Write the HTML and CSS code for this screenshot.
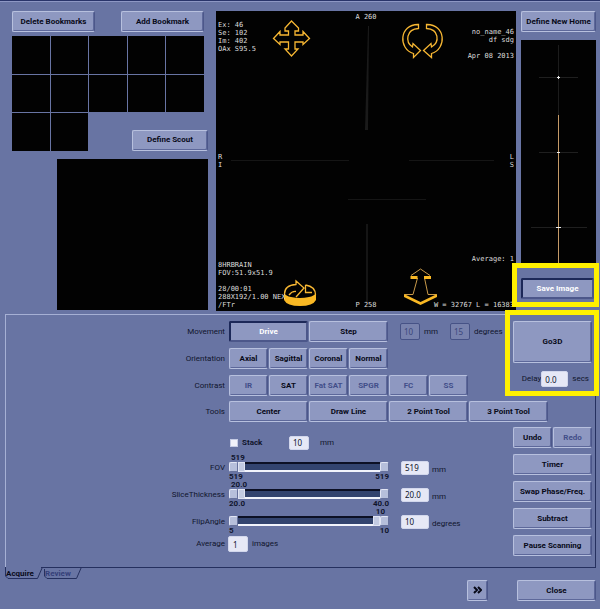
FILE: index.html
```html
<!DOCTYPE html>
<html lang="en">
<head>
<meta charset="utf-8">
<title>Scan Control</title>
<link rel="stylesheet" href="styles.css">
</head>
<body>
<main class="views">
  <section class="side">
    <div class="side-actions">
      <button class="btn">Delete Bookmarks</button>
      <button class="btn">Add Bookmark</button>
    </div>
    <div class="shelf">
      <div class="bookmarks">
        <i></i><i></i><i></i><i></i><i></i><i></i><i></i><i></i><i></i><i></i><i></i><i></i>
      </div>
      <button class="btn scout-btn">Define Scout</button>
    </div>
    <div class="scout"></div>
  </section>

  <section class="viewport">
    <svg class="scene" viewBox="0 0 300 300" aria-hidden="true">
      <path d="M152 15h1l-1 104h-3z" fill="#1a1a1a"/>
      <path d="M15 149h118v1H15zM193 149h85v1h-85zM132 188h78v1h-78zM150 213h2v78h-2z" fill="#151515"/>
      <g fill="none" stroke="#f7b733" stroke-width="1.300">
        <path d="M75.500 10 82.500 17 82.500 20 79 20 79 24 87 24 87 20.500 93.500 27.500 87 33.500 87 31 79 31 79 38 82 38 75.500 45 69 38 69 38 72.500 38 72.500 31 64 31 64 33.500 57.500 27.500 64 20.500 64 24 72.500 24 72.500 20 69 20 69 17z"/>
        <path d="M202.500 13.500C183 13 182 38 197.500 42.500V46.500L204.500 39.500 197 32.500 196.500 36C189 31 190 18 202.500 17.500z"/>
        <path d="M210.500 13.500C230 13 231 38 215.500 42.500V46.500L207.500 39.500 215 32.500 215.500 36C224 31 223 18 210.500 17.500z"/>
        <path d="M80 286 88 277 80 270V273.500C72 274 68.500 278 68.500 283M73 284Q76 280 80 280.500M89.500 274C96 275 99.500 279 99.500 284M89.500 274V281.500H96"/>
      </g>
      <path d="M195 264.500 204.500 258 214 264.500M201.500 267 197 283.500H188.500M208.500 267 212 283.500H220.500" fill="none" stroke="#c99a4a"/>
      <g fill="#f9b824">
        <path d="M194.500 265h7v3h-7zM208 265h7v3h-7z"/>
        <path d="M188 283 204.500 291 221 283V286L204.500 294 188 286z"/>
        <path d="M68 282q2 3 7 4q9 2 18 0q5-1 7-4v7q-3 6-16 6t-16-6z"/>
      </g>
    </svg>
    <pre class="note top-left">Ex: 46
Se: 102
Im: 402
OAx S95.5</pre>
    <pre class="note top-mid">A 260</pre>
    <pre class="note top-right">no_name_46
df sdg

Apr 08 2013</pre>
    <pre class="note mid-left">R
I</pre>
    <pre class="note mid-right">L
S</pre>
    <pre class="note low-left">8HRBRAIN
FOV:51.9x51.9

28/00:01
288X192/1.00 NEX
/FTr</pre>
    <pre class="note low-mid">P 258</pre>
    <pre class="note average">Average: 1</pre>
    <pre class="note low-right">W = 32767 L = 16383</pre>
  </section>

  <section class="home">
    <button class="btn">Define New Home</button>
    <svg class="strip" viewBox="0 0 75 223" aria-hidden="true">
      <path d="M37.500 5v70" stroke="#1c1c1c"/>
      <path d="M18 37.500h39M18 112.500h39M10 187.500h56" stroke="#1f1f1f"/>
      <path d="M37.500 75v148" stroke="#c49a67"/>
      <path d="M36 37.500h3M37.500 36v3M36 112.500h3M35 187.500h5" stroke="#eee"/>
    </svg>
    <div class="save">
      <button class="btn pressed">Save Image</button>
    </div>
  </section>
</main>

<section class="panel">
  <div class="upper">
    <div class="rows">
      <div class="row">
        <span class="label">Movement</span>
        <div class="keys"><button class="btn wide pressed">Drive</button><button class="btn wide">Step</button></div>
        <div class="steps">
          <input class="field off" id="mm" value="10" disabled><label for="mm">mm</label>
          <input class="field off" id="deg" value="15" disabled><label for="deg">degrees</label>
        </div>
      </div>
      <div class="row">
        <span class="label">Orientation</span>
        <div class="keys"><button class="btn">Axial</button><button class="btn">Sagittal</button><button class="btn">Coronal</button><button class="btn">Normal</button></div>
      </div>
      <div class="row">
        <span class="label">Contrast</span>
        <div class="keys"><button class="btn" disabled>IR</button><button class="btn">SAT</button><button class="btn" disabled>Fat SAT</button><button class="btn" disabled>SPGR</button><button class="btn" disabled>FC</button><button class="btn" disabled>SS</button></div>
      </div>
    </div>
    <div class="go">
      <button class="btn go-btn">Go3D</button>
      <div class="delay">
        <label for="delay">Delay</label><input class="field" id="delay" value="0.0"><span class="unit">secs</span>
      </div>
    </div>
  </div>
  <div class="row tools">
    <span class="label">Tools</span>
    <div class="keys"><button class="btn wide">Center</button><button class="btn wide">Draw Line</button><button class="btn wide">2 Point Tool</button><button class="btn wide">3 Point Tool</button></div>
  </div>
  <div class="lower">
    <div class="settings">
      <div class="stack">
        <input type="checkbox" id="stack"><label for="stack">Stack</label>
        <input class="field" value="10" aria-label="Stack spacing"><span>mm</span>
      </div>
      <div class="slider-row">
        <label class="label" for="fov">FOV</label>
        <div class="slider">
          <div class="now">519</div>
          <div class="bar"><button class="cap" aria-label="Decrease"></button><input type="range" id="fov" min="0" max="10" value="0"><button class="cap" aria-label="Increase"></button></div>
          <div class="ends"><span>519</span><span>519</span></div>
        </div>
        <input class="field" value="519" aria-label="FOV value"><span class="unit">mm</span>
      </div>
      <div class="slider-row">
        <label class="label" for="thick">SliceThickness</label>
        <div class="slider">
          <div class="now">20.0</div>
          <div class="bar"><button class="cap" aria-label="Decrease"></button><input type="range" id="thick" min="20" max="40" value="20"><button class="cap" aria-label="Increase"></button></div>
          <div class="ends"><span>20.0</span><span>40.0</span></div>
        </div>
        <input class="field" value="20.0" aria-label="Thickness value"><span class="unit">mm</span>
      </div>
      <div class="slider-row">
        <label class="label" for="flip">FlipAngle</label>
        <div class="slider">
          <div class="now at-end">10</div>
          <div class="bar"><button class="cap" aria-label="Decrease"></button><input type="range" id="flip" min="5" max="10" value="10"><button class="cap" aria-label="Increase"></button></div>
          <div class="ends"><span>5</span><span>10</span></div>
        </div>
        <input class="field" value="10" aria-label="Angle value"><span class="unit">degrees</span>
      </div>
      <div class="row average-row">
        <label class="label" for="avg">Average</label>
        <input class="field" id="avg" value="1"><span>images</span>
      </div>
    </div>
    <div class="commands">
      <div class="pair"><button class="btn">Undo</button><button class="btn" disabled>Redo</button></div>
      <button class="btn">Timer</button>
      <button class="btn">Swap Phase/Freq.</button>
      <button class="btn">Subtract</button>
      <button class="btn">Pause Scanning</button>
    </div>
  </div>
</section>

<footer class="foot">
  <nav class="tabs">
    <button class="tab active">Acquire<svg viewBox="0 0 38 13" aria-hidden="true"><path d="M.5 0V9L3 11.500H32.500L37.500 0"/></svg></button>
    <button class="tab">Review<svg viewBox="0 0 38 13" aria-hidden="true"><path d="M.5 2V9L3 11.500H32.500L37.500 0"/></svg></button>
  </nav>
  <div class="foot-actions">
    <button class="btn more" aria-label="More"><svg viewBox="0 0 9 8" aria-hidden="true"><path d="M1 1l3 3-3 3M5 1l3 3-3 3"/></svg></button>
    <button class="btn close">Close</button>
  </div>
</footer>
</body>
</html>
```
FILE: styles.css
```css
:root {
  --bg: #6874a3;
  --face: #8e98c1;
  --dark: #25305f;
  --black: #020202;
}
* { box-sizing: border-box; }
body {
  margin: 0;
  background: var(--bg);
  border-top: 1px solid #29346a;
  color: #10142c;
  font: 8px/10px Roboto, "Noto Sans", sans-serif;
}
button, input { font: inherit; color: inherit; margin: 0; }

.btn {
  height: 21px;
  padding: 0;
  background: var(--face);
  border: 1px solid;
  border-color: #b7c0de #4c578a #b7c0de #b7c0de;
  border-radius: 2px;
  box-shadow: inset -1px -1px #5d689a;
  color: #080a18;
  font-weight: 700;
  white-space: nowrap;
}
.btn:disabled { color: #424e89; }
.btn.pressed {
  border: 2px solid #1c2858;
  border-right-color: #4c578a;
  border-bottom-color: #4c578a;
  box-shadow: none;
  color: #fff;
}
.field {
  width: 20px;
  height: 14px;
  padding: 0 3px;
  background: #e6e8f6;
  border: 1px solid #d2d7ec;
  border-radius: 2px;
  font-family: "Noto Sans", sans-serif;
}
.field.off { height: 17px; background: #7882ad; border-color: #465286; color: #3b467b; }

.views {
  display: grid;
  grid-template-columns: 196px 1fr 75px;
  column-gap: 5px;
  padding: 9px 4px 3px 12px;
  border-top: 1px solid #8d97c4;
}
.side { display: flex; flex-direction: column; width: 196px; }
.side-actions { display: flex; justify-content: space-between; width: 192px; margin-bottom: 4px; }
.side-actions .btn { width: 83px; }
.shelf { display: grid; align-items: end; }
.shelf > * { grid-area: 1 / 1; }
.bookmarks { display: grid; grid-template-columns: repeat(5, 1fr); gap: 1px; width: 192px; }
.bookmarks i { aspect-ratio: 1; background: var(--black); }
.scout-btn { width: 76px; justify-self: end; }
.scout { width: 151px; height: 151px; margin-top: 8px; margin-left: auto; background: var(--black); }

.viewport { position: relative; margin-left: 3px; background: var(--black); }
.scene { display: block; width: 100%; }
.note {
  position: absolute;
  margin: 0;
  color: #dcdcdc;
  font: 7px/8px "DejaVu Sans Mono", monospace;
}
.top-left { top: 10px; left: 2px; }
.top-mid { top: 2px; left: 0; right: 0; text-align: center; }
.top-right { top: 17px; right: 2px; text-align: right; }
.mid-left { top: 142px; left: 2px; }
.mid-right { top: 142px; right: 2px; }
.low-left { bottom: 2px; left: 2px; }
.low-mid { bottom: 2px; left: 0; right: 0; text-align: center; }
.average { bottom: 48px; right: 2px; }
.low-right { bottom: 2px; right: 2px; }

.home { display: flex; flex-direction: column; }
.strip { display: block; width: 100%; margin-top: 8px; background: var(--black); }
.save { position: relative; padding: 15px 2px 0 0; }
.save .btn { width: 100%; }
.save::after, .go::after {
  content: "";
  position: absolute;
  border: 5px solid #fff000;
  pointer-events: none;
}
.save::after { inset: 0 -3px -8px -9px; }

.panel {
  margin: 0 4px 0 5px;
  padding: 6px 3px 11px 0;
  border: 1px solid;
  border-color: #a6b0d4 var(--dark) var(--dark) #a6b0d4;
}
.upper, .lower { display: flex; justify-content: space-between; }
.rows { display: flex; flex-direction: column; gap: 6px; }
.row { display: flex; align-items: center; }
.label { width: 219px; margin-right: 4px; text-align: right; }
.keys { display: flex; gap: 1px; }
.keys .btn { width: 39px; }
.keys .wide { width: 79px; }
.steps { display: flex; align-items: center; gap: 4px; margin-left: 12px; }
.steps label + .field { margin-left: 8px; }
.go { position: relative; width: 79px; }
.go-btn { width: 100%; height: 42px; }
.go::after { inset: -11px -7px 0 -8px; }
.delay { display: flex; align-items: center; justify-content: flex-end; margin-top: 8px; }
.delay .field { width: 27px; height: 16px; }
.delay .unit { margin: 0 3px 0 4px; }
.tools { margin-top: 5px; }

.lower { margin-top: 5px; }
.settings { display: flex; flex-direction: column; }
.stack { display: flex; align-items: center; height: 27px; padding: 4px 0 0 224px; }
.stack label { margin-left: 4px; width: 47px; font-weight: 700; }
.stack span { margin-left: 11px; }
input[type="checkbox"] { appearance: none; width: 8px; height: 8px; background: #f0f1fa; border: 1px solid #c5cbe4; }
.slider-row { display: flex; align-items: center; height: 27px; }
.slider { width: 160px; font-weight: 700; }
.now { padding-left: 2px; line-height: 8px; }
.at-end { padding-right: 4px; text-align: right; }
.bar { display: flex; height: 10px; }
.ends { display: flex; justify-content: space-between; line-height: 9px; }
.cap {
  width: 9px;
  height: 10px;
  padding: 0;
  background: #b6bfdb;
  border: 1px solid;
  border-color: #e2e6f4 #66719c #66719c #e2e6f4;
  border-radius: 2px;
}
input[type="range"] {
  appearance: none;
  flex: 1;
  min-width: 0;
  height: 10px;
  background: linear-gradient(#0c1024 2px, #33446f 2px 8px, #f2f4fc 8px);
}
input[type="range"]::-webkit-slider-thumb {
  appearance: none;
  width: 7px;
  height: 10px;
  background: #c3cbe2;
  border: 1px solid #dfe3f2;
}
.slider-row .field { width: 28px; margin: 0 3px 0 12px; }
.slider-row .unit { padding-top: 4px; }
.average-row { margin-top: 1px; }
.average-row .label { margin-right: 3px; }
.average-row .field { height: 16px; margin-right: 4px; padding-left: 4px; }
.commands { display: flex; flex-direction: column; gap: 6px; width: 79px; }
.pair { display: flex; gap: 1px; }
.pair .btn { flex: 1; }

.foot { display: flex; justify-content: space-between; align-items: flex-start; padding: 0 4px 8px 5px; }
.tabs { display: flex; margin-top: -1px; }
.tab {
  position: relative;
  width: 39px;
  height: 13px;
  padding: 0 0 0 1px;
  background: none;
  border: 0;
  color: #35407a;
  font-weight: 700;
  text-align: left;
}
.tab.active { background: linear-gradient(var(--bg), var(--bg)) 0 0 / 36px 1px no-repeat; color: #080a18; }
.tab svg { position: absolute; inset: 0 auto auto 0; width: 38px; height: 13px; fill: none; stroke: var(--dark); }
.foot-actions { display: flex; gap: 29px; padding-top: 12px; }
.more { width: 21px; }
.more svg { width: 9px; height: 8px; fill: none; stroke: #080a18; stroke-width: 2; vertical-align: middle; }
.close { width: 79px; }
```
